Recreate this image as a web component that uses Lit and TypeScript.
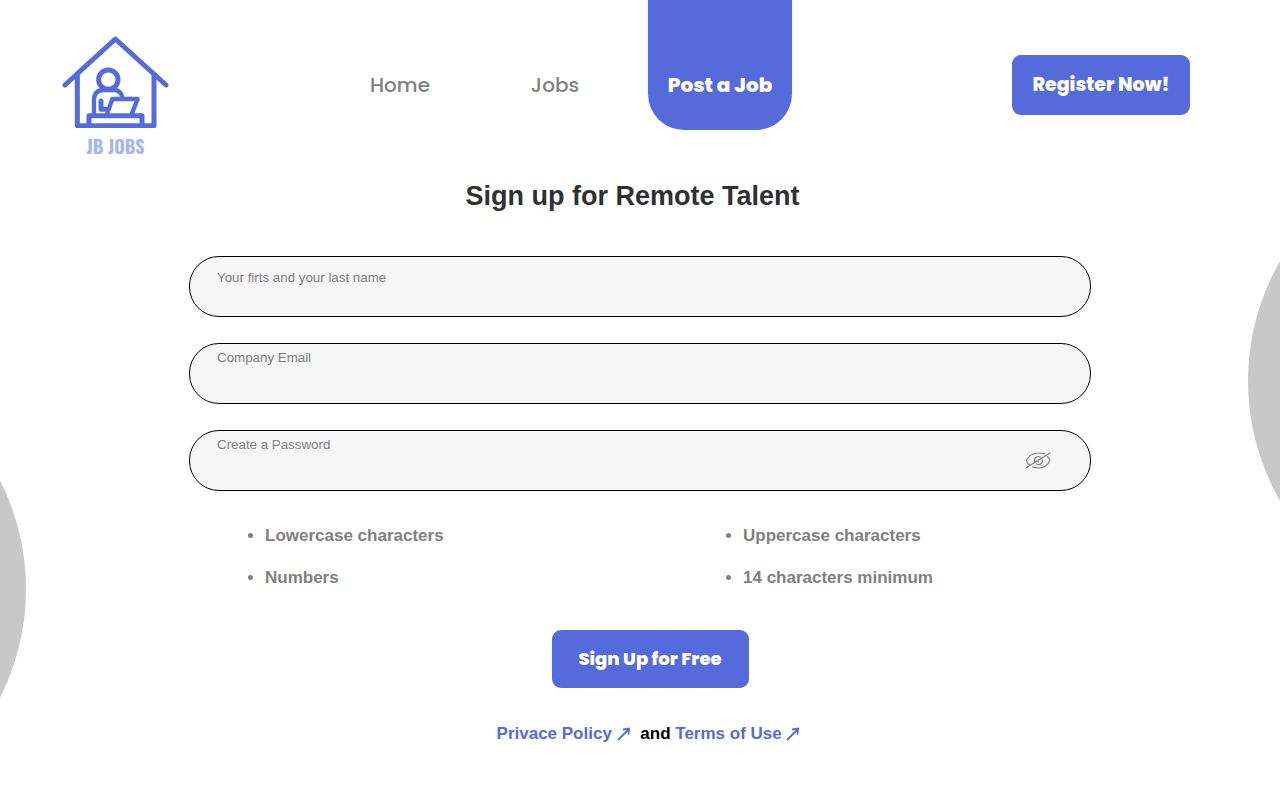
import { LitElement, html, css, svg } from "lit";
import { customElement, state } from "lit/decorators.js";

const arrow = svg`<path d="M1 13 L12 2" /><path d="M6 2.500 L12 1.500 L11.500 7.500" stroke-width="1.800" />`;

@customElement("app-root")
export class AppRoot extends LitElement {
  static styles = css`
    :host {
      display: block;
      position: relative;
      overflow: hidden;
      min-height: 100vh;
      background: #fff;
      font-family: "Liberation Sans", Arial, sans-serif;
      --brand: #556adb;
    }
    * {
      box-sizing: border-box;
    }
    .circle {
      position: absolute;
      width: 480px;
      height: 480px;
      border-radius: 50%;
      background: #c8c8c8;
    }
    .circle-right {
      top: 141px;
      right: -448px;
    }
    .circle-left {
      top: 349px;
      left: -454px;
    }
    header {
      display: flex;
      justify-content: space-between;
      align-items: flex-start;
      padding: 0 90px 0 62px;
    }
    .logo {
      display: flex;
      flex-direction: column;
      align-items: center;
      padding-top: 36px;
      text-decoration: none;
      color: #a9b4ec;
      font: 700 18px/36px Oswald, "Bebas Neue", "DejaVu Sans Condensed", sans-serif;
    }
    .logo svg {
      display: block;
      width: 107px;
      height: 92px;
      fill: none;
      stroke: var(--brand);
      stroke-width: 15;
      stroke-linecap: round;
      stroke-linejoin: round;
    }
    nav {
      display: flex;
      gap: 31px;
      padding-right: 51px;
    }
    .link {
      width: 124px;
      padding-top: 70px;
      text-align: center;
      text-decoration: none;
      color: #808080;
      font: 500 20px/30px Poppins, Inter, sans-serif;
    }
    .tab {
      width: 144px;
      height: 130px;
      padding-top: 70px;
      border-radius: 0 0 36px 36px;
      background: var(--brand);
      color: #fff;
      text-align: center;
      text-decoration: none;
      white-space: nowrap;
      font: 800 20px/30px Poppins, Inter, sans-serif;
    }
    .button {
      border: 0;
      border-radius: 9px;
      background: var(--brand);
      color: #fff;
      white-space: nowrap;
      cursor: pointer;
      font: 800 19px/30px Poppins, Inter, sans-serif;
    }
    .register {
      width: 178px;
      height: 60px;
      margin-top: 55px;
    }
    main {
      position: relative;
      max-width: 950px;
      margin: 0 auto;
      padding: 0 24px 40px;
    }
    h1 {
      margin: 16px 15px 44px 0;
      text-align: center;
      color: #303032;
      font-size: 27px;
      line-height: 32px;
    }
    .fields {
      display: grid;
      gap: 26px;
    }
    .field {
      position: relative;
      display: block;
    }
    .field input {
      display: block;
      width: 100%;
      height: 61px;
      padding: 0 80px 32px 27px;
      border: 1px solid #000;
      border-radius: 30px;
      background: #f6f6f6;
      font-family: inherit;
    }
    .field .roomy {
      padding-bottom: 18px;
    }
    .field input::placeholder {
      color: #808080;
    }
    .eye {
      position: absolute;
      right: 39px;
      top: 20px;
      padding: 0;
      border: 0;
      background: none;
      cursor: pointer;
    }
    .eye svg {
      display: block;
      fill: none;
      stroke: #808080;
      stroke-width: 1.1;
      stroke-linecap: round;
    }
    .rules {
      display: grid;
      grid-template-columns: 478px 1fr;
      row-gap: 22px;
      margin: 35px 0 42px;
      padding: 0 0 0 76px;
      color: #808080;
      font-weight: bold;
      font-size: 17px;
      line-height: 20px;
    }
    .actions {
      display: flex;
      flex-direction: column;
      align-items: center;
      gap: 36px;
      padding-left: 20px;
    }
    .submit {
      width: 197px;
      height: 58px;
      font-size: 18px;
    }
    .legal {
      margin: 0;
      padding-right: 2px;
      font-weight: bold;
      font-size: 17px;
      line-height: 20px;
    }
    .legal a {
      color: var(--brand);
      text-decoration: none;
    }
    .legal svg {
      width: 15px;
      height: 15px;
      vertical-align: -3px;
      fill: none;
      stroke: currentColor;
      stroke-width: 2;
    }
    .first {
      margin-right: 4px;
    }
  `;

  @state() private visible = false;

  render() {
    return html`
      <div class="circle circle-right"></div>
      <div class="circle circle-left"></div>
      <header>
        <a class="logo" href="#">
          <svg viewBox="36 33 321 276" aria-hidden="true">
            <path d="M45 180 L196 42 L348 180" />
            <path d="M82 150 V302 H312 V150" />
            <circle cx="175" cy="164" r="29" />
            <path d="M132 264 V226 Q132 195 161 195 H190 Q214 195 217 218" stroke-width="13" />
            <path d="M153 228 V253 H168" />
            <path d="M172 265 L187 222 H263 L246 265" stroke-width="13" />
            <path d="M117 300 V272 H276 V300" />
          </svg>
          <span>JB JOBS</span>
        </a>
        <nav>
          <a class="link" href="#home">Home</a>
          <a class="link" href="#jobs">Jobs</a>
          <a class="tab" href="#post">Post a Job</a>
        </nav>
        <button class="button register" type="button">Register Now!</button>
      </header>
      <main>
        <h1>Sign up for Remote Talent</h1>
        <form @submit=${(e: Event) => e.preventDefault()}>
          <div class="fields">
            <div class="field">
              <input id="name" class="roomy" type="text" aria-label="Your firts and your last name" placeholder="Your firts and your last name" />
            </div>
            <div class="field">
              <input id="email" type="email" aria-label="Company Email" placeholder="Company Email" />
            </div>
            <div class="field">
              <input id="password" type=${this.visible ? "text" : "password"} aria-label="Create a Password" placeholder="Create a Password" />
              <button class="eye" type="button" aria-label="Toggle password" @click=${() => (this.visible = !this.visible)}>
                <svg width="27" height="21" viewBox="0 0 27 21">
                  <path d="M1.500 17.500 L25 3" />
                  <path d="M4.500 15 Q1.500 12.500 1.500 10.500 Q5 3 13.500 3 Q17 3 20 4" />
                  <path d="M22.500 6.500 Q25 9 25 10.500 Q21.500 18 13.500 18 Q10.500 18 7.500 17" />
                  <path d="M9.700 12 A3.900 3.900 0 0 1 15.500 7.300" />
                  <path d="M17.200 9.500 A3.900 3.900 0 0 1 11.500 14" />
                  <path d="M13.200 10.500 V12" />
                </svg>
              </button>
            </div>
          </div>
          <ul class="rules">
            <li>Lowercase characters</li>
            <li>Uppercase characters</li>
            <li>Numbers</li>
            <li>14 characters minimum</li>
          </ul>
          <div class="actions">
            <button class="button submit" type="submit">Sign Up for Free</button>
            <p class="legal">
              <a class="first" href="#privacy">Privace Policy <svg viewBox="0 0 15 15" aria-hidden="true">${arrow}</svg></a>
              and
              <a href="#terms">Terms of Use <svg viewBox="0 0 15 15" aria-hidden="true">${arrow}</svg></a>
            </p>
          </div>
        </form>
      </main>
    `;
  }
}
